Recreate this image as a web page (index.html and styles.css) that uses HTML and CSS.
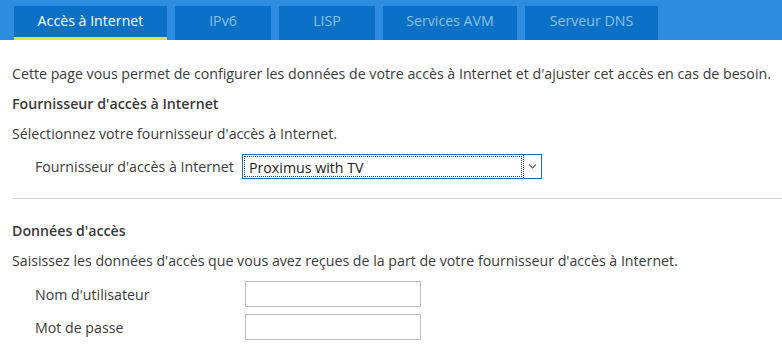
FILE: index.html
```html
<!DOCTYPE html>
<html lang="fr">
<head>
  <meta charset="UTF-8" />
  <title>Accès à Internet</title>
  <link rel="stylesheet" href="styles.css">
</head>
<body>
  <nav class="tabs">
    <a class="tab active" href="#">Accès à Internet</a>
    <a class="tab" href="#">IPv6</a>
    <a class="tab" href="#">LISP</a>
    <a class="tab" href="#">Services AVM</a>
    <a class="tab" href="#">Serveur DNS</a>
  </nav>

  <main class="content">
    <p class="intro">Cette page vous permet de configurer les données de votre accès à Internet et d'ajuster cet accès en cas de besoin.</p>

    <section class="block">
      <h2>Fournisseur d'accès à Internet</h2>
      <p>Sélectionnez votre fournisseur d'accès à Internet.</p>
      <div class="row">
        <label class="label-isp" for="isp">Fournisseur d'accès à Internet</label>
        <div class="select-wrap">
          <span class="select-value">Proximus with TV</span>
          <span class="select-arrow">
            <svg width="9" height="5" viewBox="0 0 9 5"><path d="M1 0.5 L4.5 4 L8 0.5" fill="none" stroke="#666" stroke-width="1.1"/></svg>
          </span>
        </div>
      </div>
    </section>

    <hr class="divider">

    <section class="block">
      <h2>Données d'accès</h2>
      <p class="hint">Saisissez les données d'accès que vous avez reçues de la part de votre fournisseur d'accès à Internet.</p>
      <div class="row">
        <label class="label-field" for="user">Nom d'utilisateur</label>
        <input type="text" id="user">
      </div>
      <div class="row">
        <label class="label-field" for="pass">Mot de passe</label>
        <input type="password" id="pass">
      </div>
    </section>
  </main>
</body>
</html>
```

FILE: styles.css
```css
* {
  margin: 0;
  padding: 0;
  box-sizing: border-box;
}

body {
  font-family: "Open Sans", sans-serif;
  font-size: 14.2px;
  color: #3a3a3a;
  background: #ffffff;
  overflow: hidden;
}

a {
  text-decoration: none;
  color: inherit;
}

/* Tabs */
.tabs {
  display: flex;
  gap: 8px;
  height: 40px;
  padding: 6px 0 0 14px;
  background-color: #2c8de0;
}

.tab {
  display: flex;
  align-items: center;
  justify-content: center;
  height: 34px;
  padding-bottom: 2px;
  background-color: #0a71c6;
  color: #8cc0ee;
  font-size: 14.2px;
  border-bottom: 3px solid transparent;
}

.tab:nth-child(1) { width: 153px; }
.tab:nth-child(2) { width: 96px; }
.tab:nth-child(3) { width: 96px; }
.tab:nth-child(4) { width: 134px; }
.tab:nth-child(5) { width: 133px; }

.tab.active {
  color: #ffffff;
  border-bottom-color: #dfe43a;
}

/* Content */
.content {
  padding: 19px 0 0 12px;
}

.content p,
.content h2 {
  font-size: 14.2px;
  line-height: 30px;
}

.content h2 {
  font-weight: 600;
}

.content .hint {
  margin-bottom: 1px;
}

.row {
  display: flex;
  align-items: center;
  padding-left: 23px;
  height: 34px;
}

.label-isp {
  width: 207px;
}

.label-field {
  width: 210px;
}

.select-wrap {
  display: flex;
  width: 300px;
  height: 25px;
  border: 1px solid #1b6db0;
  background: #fff;
}

.select-value {
  flex: 1;
  padding-left: 4px;
  line-height: 21px;
  border: 1px dotted #1b4f80;
  margin: 1px;
  color: #222;
}

.select-arrow {
  width: 18px;
  display: flex;
  align-items: center;
  justify-content: center;
  border-left: 1px dotted #333;
}

.divider {
  border: none;
  border-top: 1px solid #d8d8d8;
  margin: 15px 0 17px 0;
}

input {
  width: 176px;
  height: 26px;
  border: 1px solid #bdbdbd;
  font-family: inherit;
  font-size: 14px;
  padding: 0 4px;
}

.row + .row {
  height: 32px;
}
```
